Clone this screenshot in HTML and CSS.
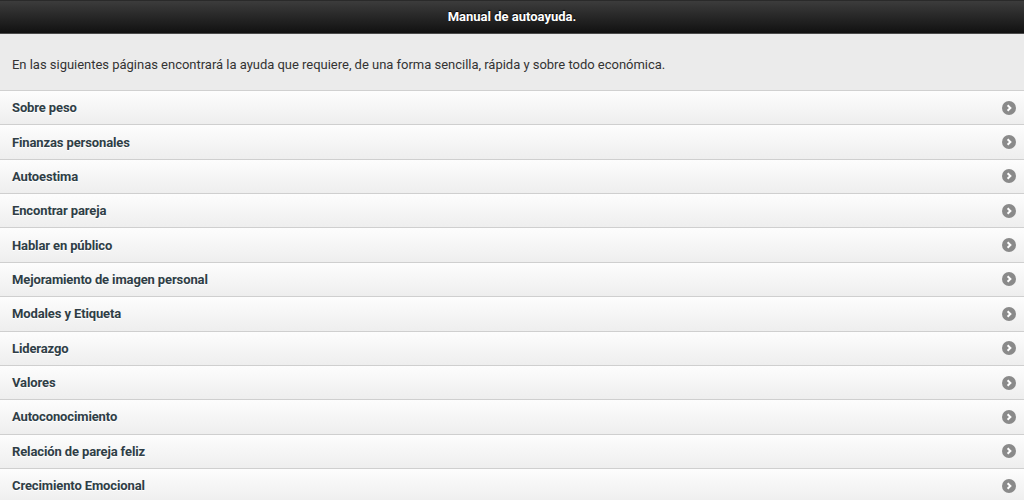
FILE: index.html
```html
<!DOCTYPE html>
<html lang="es">
<head>
    <meta charset="UTF-8">
    <title>Manual de autoayuda.</title>
    <link rel="stylesheet" href="styles.css">
</head>
<body>
    <div class="header">Manual de autoayuda.</div>
    <div class="intro">En las siguientes páginas encontrará la ayuda que requiere, de una forma sencilla, rápida y sobre todo económica.</div>
    <ul class="menu">
        <li><span>Sobre peso</span><svg class="arrow" viewBox="0 0 14 14"><circle cx="7" cy="7" r="7"/><path d="M5.6 4.2 8.4 7 5.6 9.8"/></svg></li>
        <li><span>Finanzas personales</span><svg class="arrow" viewBox="0 0 14 14"><circle cx="7" cy="7" r="7"/><path d="M5.6 4.2 8.4 7 5.6 9.8"/></svg></li>
        <li><span>Autoestima</span><svg class="arrow" viewBox="0 0 14 14"><circle cx="7" cy="7" r="7"/><path d="M5.6 4.2 8.4 7 5.6 9.8"/></svg></li>
        <li><span>Encontrar pareja</span><svg class="arrow" viewBox="0 0 14 14"><circle cx="7" cy="7" r="7"/><path d="M5.6 4.2 8.4 7 5.6 9.8"/></svg></li>
        <li><span>Hablar en público</span><svg class="arrow" viewBox="0 0 14 14"><circle cx="7" cy="7" r="7"/><path d="M5.6 4.2 8.4 7 5.6 9.8"/></svg></li>
        <li><span>Mejoramiento de imagen personal</span><svg class="arrow" viewBox="0 0 14 14"><circle cx="7" cy="7" r="7"/><path d="M5.6 4.2 8.4 7 5.6 9.8"/></svg></li>
        <li><span>Modales y Etiqueta</span><svg class="arrow" viewBox="0 0 14 14"><circle cx="7" cy="7" r="7"/><path d="M5.6 4.2 8.4 7 5.6 9.8"/></svg></li>
        <li><span>Liderazgo</span><svg class="arrow" viewBox="0 0 14 14"><circle cx="7" cy="7" r="7"/><path d="M5.6 4.2 8.4 7 5.6 9.8"/></svg></li>
        <li><span>Valores</span><svg class="arrow" viewBox="0 0 14 14"><circle cx="7" cy="7" r="7"/><path d="M5.6 4.2 8.4 7 5.6 9.8"/></svg></li>
        <li><span>Autoconocimiento</span><svg class="arrow" viewBox="0 0 14 14"><circle cx="7" cy="7" r="7"/><path d="M5.6 4.2 8.4 7 5.6 9.8"/></svg></li>
        <li><span>Relación de pareja feliz</span><svg class="arrow" viewBox="0 0 14 14"><circle cx="7" cy="7" r="7"/><path d="M5.6 4.2 8.4 7 5.6 9.8"/></svg></li>
        <li><span>Crecimiento Emocional</span><svg class="arrow" viewBox="0 0 14 14"><circle cx="7" cy="7" r="7"/><path d="M5.6 4.2 8.4 7 5.6 9.8"/></svg></li>
    </ul>
</body>
</html>
```
FILE: styles.css
```css
body {
    margin: 0;
    padding: 0;
    background: #ebebeb;
    font-family: Roboto, 'Liberation Sans', sans-serif;
    font-size: 13px;
    overflow: hidden;
}
.header {
    height: 34px;
    line-height: 31px;
    background: linear-gradient(#3c3c3c, #111);
    border-top: 1px solid #2a2a2a;
    border-bottom: 1px solid #4a4a4a;
    box-sizing: border-box;
    color: #fff;
    font-weight: 700;
    text-align: center;
    text-shadow: 0 -1px 1px #000;
}
.intro {
    padding: 23px 12px 0 12px;
    height: 33px;
    color: #333;
    letter-spacing: -0.02px;
}
.menu {
    list-style: none;
    margin: 0;
    padding: 0;
    border-top: 1px solid #d0d0d0;
}
.menu li {
    display: flex;
    align-items: center;
    justify-content: space-between;
    height: 33.36px;
    padding: 0 8px 0 12px;
    background: linear-gradient(#fdfdfd, #eeeeee);
    border-bottom: 1px solid #cfcfcf;
    color: #2f3e46;
    font-weight: 700;
    letter-spacing: -0.12px;
    text-shadow: 0 1px 0 #fff;
}
.arrow {
    width: 14px;
    height: 14px;
}
.arrow circle {
    fill: #8a8a8a;
}
.arrow path {
    fill: none;
    stroke: #fff;
    stroke-width: 2;
}
```
